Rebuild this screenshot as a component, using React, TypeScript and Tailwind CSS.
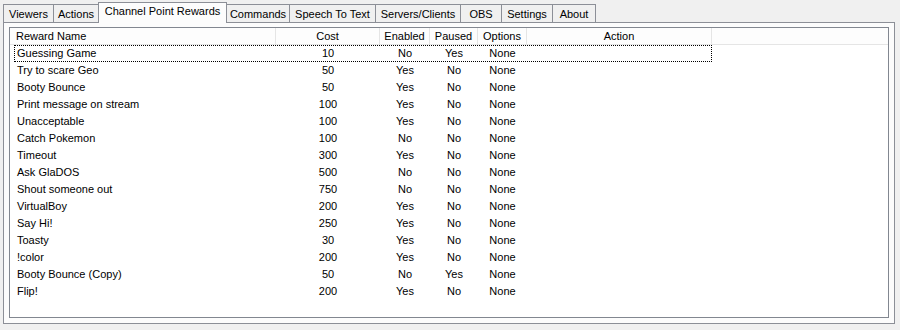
const tabs = [
  { label: "Viewers", w: "w-[51px]" },
  { label: "Actions", w: "w-[46px]" },
  { label: "Channel Point Rewards", w: "w-[129px]", active: true },
  { label: "Commands", w: "w-[64px]" },
  { label: "Speech To Text", w: "w-[87px]" },
  { label: "Servers/Clients", w: "w-[86px]" },
  { label: "OBS", w: "w-[42px]" },
  { label: "Settings", w: "w-[52px]" },
  { label: "About", w: "w-[44px]" },
];

const rewards: [string, number, string, string][] = [
  ["Guessing Game", 10, "No", "Yes"],
  ["Try to scare Geo", 50, "Yes", "No"],
  ["Booty Bounce", 50, "Yes", "No"],
  ["Print message on stream", 100, "Yes", "No"],
  ["Unacceptable", 100, "Yes", "No"],
  ["Catch Pokemon", 100, "No", "No"],
  ["Timeout", 300, "Yes", "No"],
  ["Ask GlaDOS", 500, "No", "No"],
  ["Shout someone out", 750, "No", "No"],
  ["VirtualBoy", 200, "Yes", "No"],
  ["Say Hi!", 250, "Yes", "No"],
  ["Toasty", 30, "Yes", "No"],
  ["!color", 200, "Yes", "No"],
  ["Booty Bounce (Copy)", 50, "No", "Yes"],
  ["Flip!", 200, "Yes", "No"],
];

function TabStrip() {
  return (
    <div className="flex h-[22px] items-end pl-[3px]">
      {tabs.map((t, i) =>
        t.active ? (
          <div
            key={t.label}
            className={`relative z-10 -mb-px -ml-px flex h-[21px] items-start justify-center border border-b-0 border-[#8c8f97] bg-[#fcfcfc] pt-[3px] ${t.w}`}
          >
            {t.label}
          </div>
        ) : (
          <div
            key={t.label}
            className={`flex h-[18px] items-center justify-center border border-b-0 border-[#8c8f97] bg-[#f0f0f0] pt-px ${t.w} ${i === 0 ? "" : "-ml-px"}`}
          >
            {t.label}
          </div>
        ),
      )}
    </div>
  );
}

function RewardList() {
  return (
    <div className="mx-[5px] mt-[4px] h-[291px] border border-[#828790] bg-white">
      <div className="flex h-[17px] border-b border-[#e5e5e5] bg-[#fdfdfd]">
        <div className="flex w-[266px] items-center border-r border-[#e5e5e5] pl-[6px]">Reward Name</div>
        <div className="flex w-[104px] items-center justify-center border-r border-[#e5e5e5]">Cost</div>
        <div className="flex w-[50px] items-center justify-center border-r border-[#e5e5e5]">Enabled</div>
        <div className="flex w-[48px] items-center justify-center border-r border-[#e5e5e5]">Paused</div>
        <div className="flex w-[49px] items-center justify-center border-r border-[#e5e5e5]">Options</div>
        <div className="flex w-[185px] items-center justify-center border-r border-[#e5e5e5]">Action</div>
      </div>
      {rewards.map(([name, cost, enabled, paused], i) => (
        <div
          key={name}
          className={`ml-[4px] flex h-[17px] w-[698px] items-center ${i === 0 ? "outline-1 -outline-offset-1 outline-black outline-dotted" : ""}`}
        >
          <div className="w-[262px] pl-[3px]">{name}</div>
          <div className="w-[104px] text-center">{cost}</div>
          <div className="w-[50px] text-center">{enabled}</div>
          <div className="w-[48px] text-center">{paused}</div>
          <div className="w-[49px] text-center">None</div>
          <div className="w-[185px]" />
        </div>
      ))}
    </div>
  );
}

export default function App() {
  return (
    <div className="h-[330px] w-[900px] bg-[#f0f0f0] text-[11px] leading-none text-black [font-family:'Liberation_Sans',Arial,sans-serif]">
      <TabStrip />
      <div className="ml-[3px] h-[302px] w-[892px] border border-[#8c8f97] bg-[#fcfcfc]">
        <RewardList />
      </div>
    </div>
  );
}
